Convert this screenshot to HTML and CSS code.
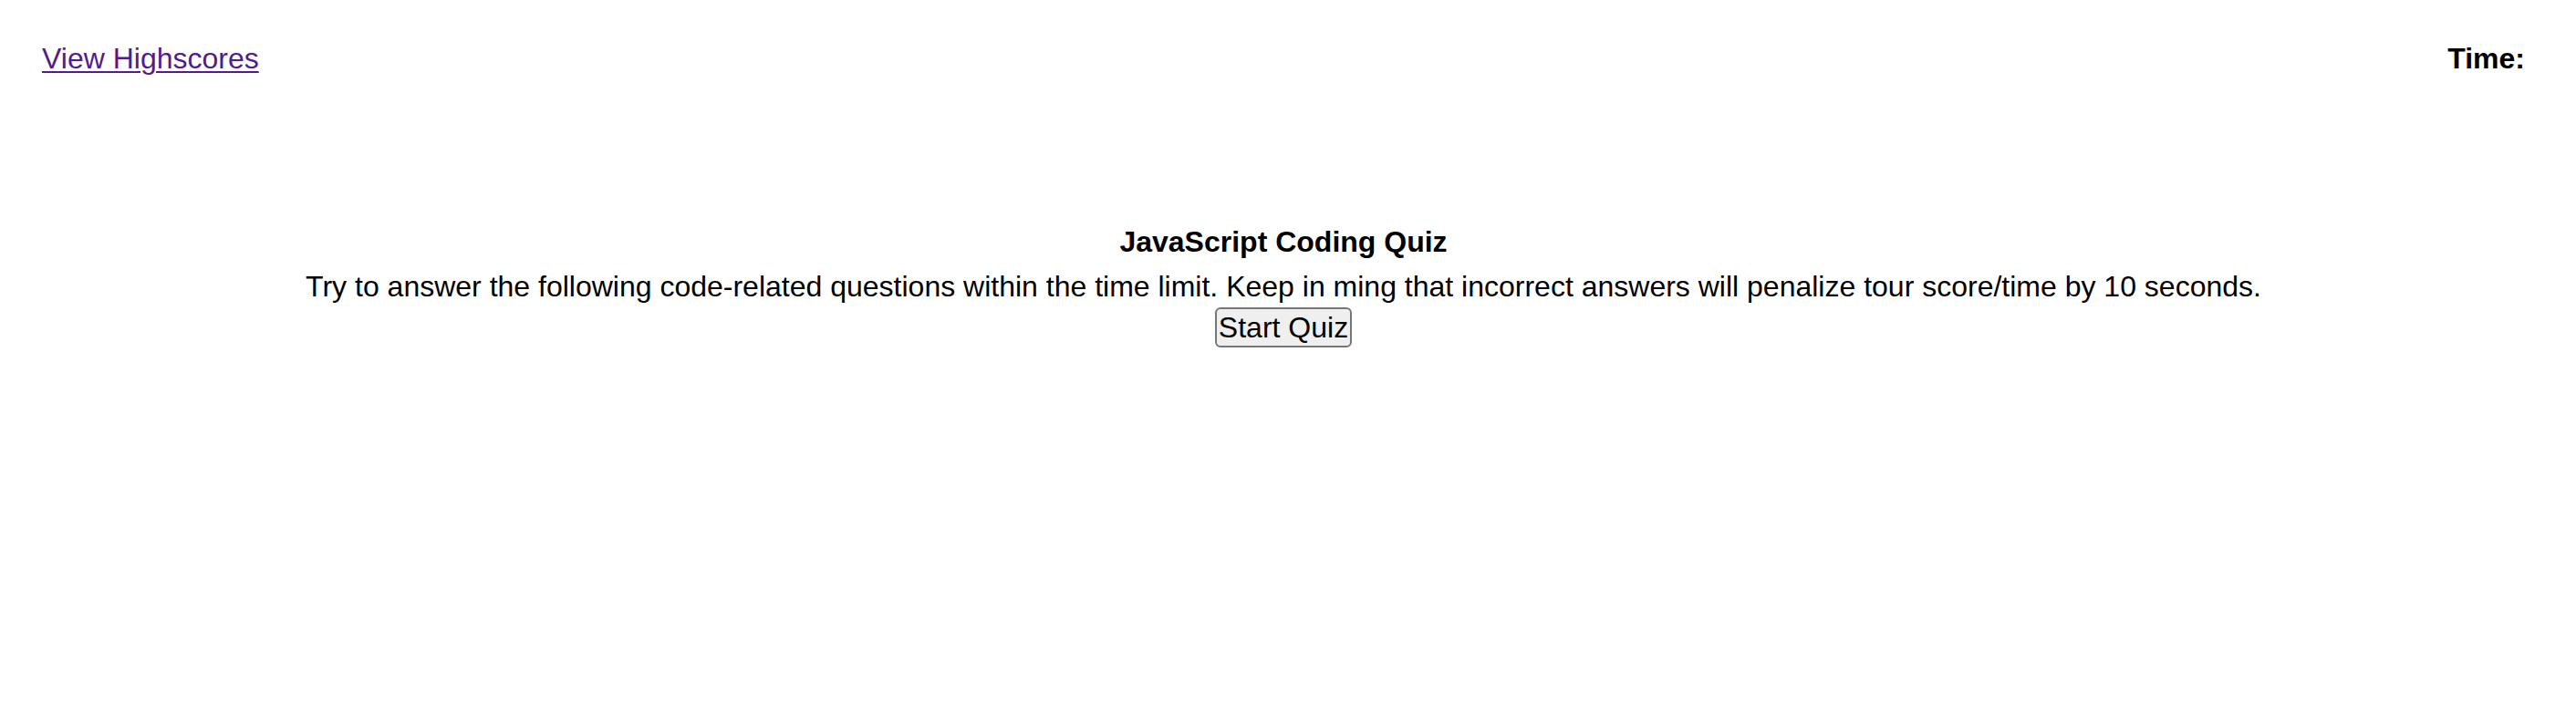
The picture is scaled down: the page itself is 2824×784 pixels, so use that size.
FILE: index.html
```html
<!DOCTYPE html>
<html lang="en">
<head>
<meta charset="utf-8">
<title>JavaScript Coding Quiz</title>
<link rel="stylesheet" href="styles.css">
</head>
<body>
<header class="top-bar">
  <a class="highscores-link" href="#">View Highscores</a>
  <div class="timer">Time:</div>
</header>
<main class="quiz">
  <div class="quiz-title">JavaScript Coding Quiz</div>
  <p class="quiz-intro">Try to answer the following code-related questions within the time limit. Keep in ming that incorrect answers will penalize tour score/time by 10 seconds.</p>
  <button class="start-btn" type="button">Start Quiz</button>
</main>
</body>
</html>
```

FILE: styles.css
```css
html, body {
  margin: 0;
  padding: 0;
  background: #ffffff;
}

body {
  font-family: "Liberation Sans", Arial, sans-serif;
  font-size: 32px;
  line-height: 37px;
  color: #000000;
}

.top-bar {
  display: flex;
  justify-content: space-between;
  align-items: flex-start;
  padding: 46px 56px 0 46px;
}

.highscores-link {
  color: #551a8b;
  text-decoration: underline;
  text-decoration-thickness: 2px;
  text-underline-offset: 3px;
}

.timer {
  font-weight: bold;
}

.quiz {
  display: flex;
  flex-direction: column;
  align-items: center;
  text-align: center;
  padding: 0 56px 0 46px;
  margin-top: 164px;
}

.quiz-title {
  font-weight: bold;
}

.quiz-intro {
  margin: 12px 0 0 0;
}

.start-btn {
  margin-top: 4px;
  font-family: "Liberation Sans", Arial, sans-serif;
  font-size: 32px;
  line-height: 36px;
  height: 44px;
  box-sizing: border-box;
  padding: 1px 2px;
  border: 2px solid #767676;
  border-radius: 6px;
  background: #efefef;
  color: #000000;
}
```
